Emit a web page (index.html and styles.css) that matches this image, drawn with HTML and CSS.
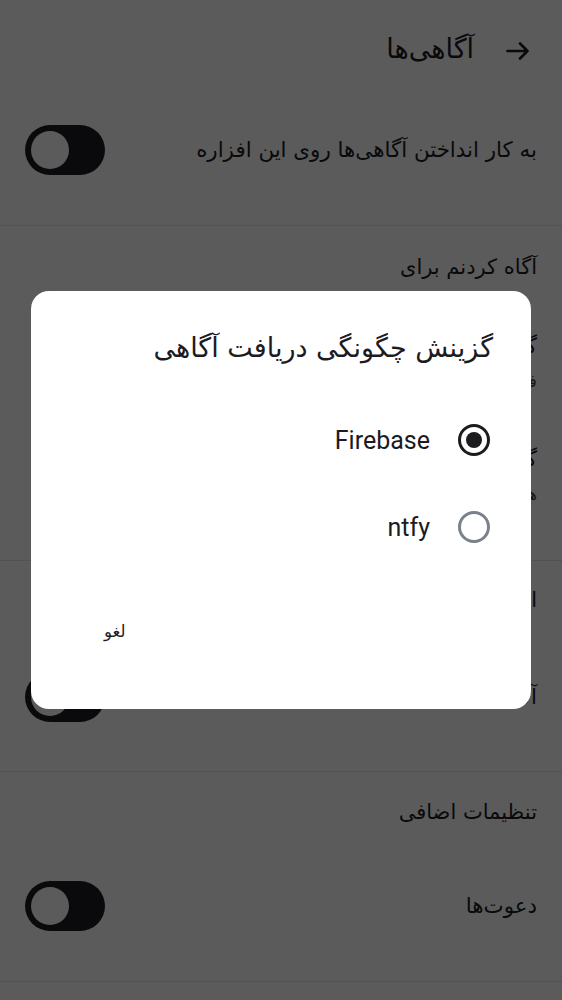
FILE: index.html
```html
<!DOCTYPE html>
<html lang="fa" dir="rtl">
<head>
<meta charset="utf-8">
<title>آگاهی‌ها</title>
<link rel="stylesheet" href="styles.css">
</head>
<body>
<div class="page">
  <section class="sec sec-a">
    <header class="topbar">
      <svg class="back" viewBox="0 0 24 18" width="24" height="18"><path d="M1.5 9H21.5M14 1.5L21.5 9L14 16.5" fill="none" stroke="currentColor" stroke-width="2.6" stroke-linecap="round" stroke-linejoin="round"/></svg>
      <h1 class="title">آگاهی‌ها</h1>
    </header>
    <div class="row">
      <span class="row-text">به کار انداختن آگاهی‌ها روی این افزاره</span>
      <span class="switch"><span class="knob"></span></span>
    </div>
  </section>

  <section class="sec sec-b">
    <h2 class="sec-title">آگاه کردنم برای</h2>
    <div class="item">
      <div class="item-title">گفتگوهای یک به یک</div>
      <div class="item-sub">فقط نام‌بردن‌ها و کلیدواژه‌ها</div>
    </div>
    <div class="item">
      <div class="item-title">گفتگوهای گروهی</div>
      <div class="item-sub">همه پیام‌ها</div>
    </div>
  </section>

  <section class="sec sec-c">
    <h2 class="sec-title">اعلان‌های سیستمی</h2>
    <div class="row">
      <span class="row-text">آگاهی از تماس‌ها</span>
      <span class="switch"><span class="knob"></span></span>
    </div>
  </section>

  <section class="sec sec-d">
    <h2 class="sec-title">تنظیمات اضافی</h2>
    <div class="row">
      <span class="row-text">دعوت‌ها</span>
      <span class="switch"><span class="knob"></span></span>
    </div>
  </section>
</div>

<div class="scrim">
  <div class="dialog">
    <h3 class="dlg-title">گزینش چگونگی دریافت آگاهی</h3>
    <div class="options">
      <label class="option">
        <span class="radio on"><span class="dot"></span></span>
        <span class="opt-text">Firebase</span>
      </label>
      <label class="option">
        <span class="radio"></span>
        <span class="opt-text">ntfy</span>
      </label>
    </div>
    <div class="actions">
      <span class="btn">لغو</span>
    </div>
  </div>
</div>
</body>
</html>
```

FILE: styles.css
```css
* { box-sizing: border-box; margin: 0; padding: 0; }
html, body { width: 562px; height: 1000px; overflow: hidden; }
body {
  background: #ffffff;
  font-family: "DejaVu Sans", "Noto Sans", sans-serif;
  color: #1c1b1f;
  direction: rtl;
}
.page { width: 562px; }
.sec { border-bottom: 1px solid #e6e6e8; }
.sec-a { height: 226px; }
.topbar {
  height: 98px;
  display: flex;
  align-items: center;
  padding-right: 32px;
  gap: 32px;
}
.back { color: #1c1b1f; margin-top: 4px; }
.title { font-size: 27px; font-weight: normal; line-height: 36px; }
.row {
  height: 104px;
  display: flex;
  align-items: center;
  justify-content: space-between;
  padding: 0 25px;
}
.row-text { font-size: 21.4px; line-height: 30px; }
.switch {
  width: 80px; height: 50px; border-radius: 25px;
  background: #1c1e24;
  display: flex; align-items: center;
  padding: 0 6px;
  justify-content: flex-end;
}
.knob { width: 38px; height: 38px; border-radius: 50%; background: #ffffff; }
.sec-b { height: 335px; padding-top: 26px; padding-right: 25px; }
.sec-title { font-size: 21px; font-weight: normal; line-height: 30px; }
.sec-b .sec-title { margin-bottom: 32px; }
.item { height: 113px; padding-top: 18px; }
.item-title { font-size: 21px; line-height: 28px; }
.item-sub { font-size: 17px; line-height: 26px; margin-top: 8px; color: #49454f; }
.sec-c { height: 211px; padding-top: 24px; }
.sec-c .sec-title, .sec-d .sec-title { padding-right: 25px; }
.sec-c .row { margin-top: 30px; }
.sec-d { height: 210px; padding-top: 25px; }
.sec-d .row { margin-top: 27px; }

.scrim {
  position: fixed; inset: 0;
  background: rgba(0, 0, 0, 0.643);
  display: flex; align-items: center; justify-content: center;
}
.dialog {
  width: 500px; height: 418px;
  background: #ffffff;
  border-radius: 18px;
  padding: 34px 38px 0 38px;
  display: flex; flex-direction: column;
}
.dlg-title {
  font-size: 27px; font-weight: normal; line-height: 46px;
  color: #1c1b1f;
}
.options { margin-top: 41px; display: flex; flex-direction: column; gap: 31px; padding-right: 3px; }
.option { display: flex; align-items: center; gap: 28px; height: 56px; }
.radio {
  width: 32px; height: 32px; border-radius: 50%;
  border: 3px solid #7a818b;
  display: flex; align-items: center; justify-content: center;
}
.radio.on { border-color: #1c1b1f; }
.dot { width: 16px; height: 16px; border-radius: 50%; background: #1c1b1f; }
.opt-text { font-family: Roboto, "Noto Sans", sans-serif; font-size: 25px; color: #1c1b1f; }
.actions { margin-top: 62px; display: flex; justify-content: flex-end; padding-left: 35px; }
.btn { font-size: 16.5px; line-height: 30px; color: #1c1b1f; }
```
